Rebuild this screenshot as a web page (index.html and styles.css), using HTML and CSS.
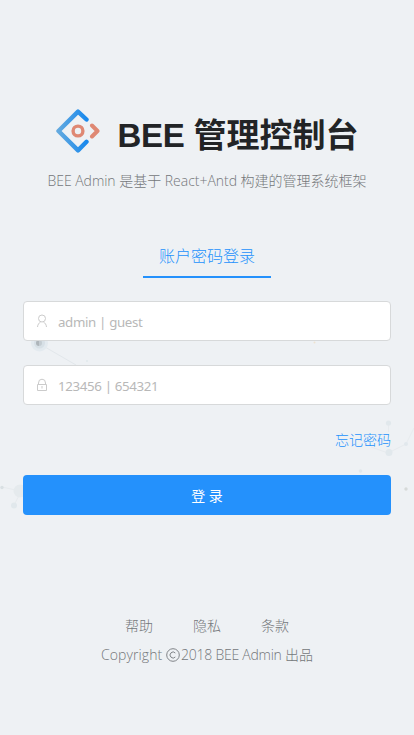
FILE: index.html
```html
<!DOCTYPE html>
<html lang="zh-CN">
<head>
<meta charset="utf-8">
<title>BEE 管理控制台</title>
<link rel="stylesheet" href="styles.css">
</head>
<body>
<svg class="backdrop" width="414" height="735" viewBox="0 0 414 735" aria-hidden="true">
  <g fill="none" stroke="#e7ebee" stroke-width="1">
    <path stroke="#e2e7eb" d="M45 347L76 365"/>
    <path d="M2 487L20 491M14 505L22 490M388.500 423V432M388 453L406 444L414 428M388 453L371 447"/>
  </g>
  <circle cx="39.500" cy="343" r="8.500" fill="#e3eaef"/>
  <circle cx="39.500" cy="343" r="5.500" fill="#d7e0e6"/>
  <path d="M39 340a3 3 0 0 0 0 6z" fill="#aeb5ba"/>
  <path d="M39 340a3 3 0 0 1 0 6z" fill="#c4ccd2"/>
  <g fill="#e1e8ec">
    <circle cx="2" cy="487.500" r="1.700" fill="#d9e0e3"/>
    <circle cx="20" cy="491" r="6.500" fill="#e5eaed"/>
    <circle cx="14" cy="505.500" r="3"/>
    <circle cx="388.500" cy="423" r="2.600"/>
    <circle cx="389" cy="452.500" r="3.500"/>
    <circle cx="406" cy="444" r="2"/>
    <circle cx="360.500" cy="471" r="1.800"/>
    <circle cx="406" cy="489" r="1.700" fill="#d6dad9"/>
    <circle cx="87" cy="361" r="1"/>
    <circle cx="314.500" cy="342.500" r="1" fill="#eee2d0"/>
  </g>
</svg>
<main class="page">
  <header class="brand">
    <svg class="logo" width="44" height="44" viewBox="0 0 44 44" aria-hidden="true">
      <defs><linearGradient id="blue" x1="0" x2="1" y1="0" y2="0"><stop offset="0" stop-color="#62a9df"/><stop offset="1" stop-color="#1989ed"/></linearGradient></defs>
      <path d="M30.500 10.500L22 2.600L2.500 22L22 41.400L30.500 32.800" fill="none" stroke="url(#blue)" stroke-width="4.400" stroke-linecap="round" stroke-linejoin="round"/>
      <circle cx="22" cy="22" r="4.900" fill="none" stroke="#df8873" stroke-width="3.400"/>
      <path d="M36 16.500L41.500 22L36 27.500" fill="none" stroke="#df8873" stroke-width="4" stroke-linecap="round" stroke-linejoin="round"/>
    </svg>
    <h1 class="title"><span class="name">BEE </span>管理控制台</h1>
  </header>
  <p class="subtitle"><span class="latin">BEE Admin </span>是基于<span class="latin"> React+Antd </span>构建的管理系统框架</p>
  <nav class="tabs"><a class="tab">账户密码登录</a></nav>
  <form class="form">
    <label class="field">
      <svg class="field-icon" width="12" height="14" viewBox="0 0 12 14" aria-hidden="true"><circle cx="6" cy="4.500" r="3.500"/><path d="M1.500 13C1.700 10.500 3 8.900 4.600 8M7.400 8C9 8.900 10.300 10.500 10.500 13"/></svg>
      <input class="input" type="text" placeholder="admin | guest">
    </label>
    <label class="field">
      <svg class="field-icon" width="12" height="14" viewBox="0 0 12 14" aria-hidden="true"><path d="M1.500 6.500H10.500V12.500H1.500ZM2.500 6.500V5A3.500 3.800 0 0 1 9.500 5V6.500M6 8V10.500"/></svg>
      <input class="input" type="text" placeholder="123456 | 654321">
    </label>
    <a class="forgot">忘记密码</a>
    <button class="submit" type="button">登 录</button>
  </form>
  <footer class="footer">
    <div class="links"><a>帮助</a><a>隐私</a><a>条款</a></div>
    <p class="copyright"><span class="word">Copyright </span><svg class="copy-mark" width="14" height="14" viewBox="0 0 14 14" aria-label="©"><circle cx="7" cy="7" r="6.300"/><path d="M9.300 5A3 3 0 1 0 9.300 9"/></svg><span class="owner">2018 BEE Admin </span>出品</p>
  </footer>
</main>
</body>
</html>
```
FILE: styles.css
```css
* { box-sizing: border-box; }
body {
  margin: 0;
  min-height: 735px;
  background: #eef1f4;
  color: #74777a;
  font: 14px/21px "Open Sans", "Noto Sans CJK SC", sans-serif;
}
.backdrop { position: absolute; top: 0; left: 0; z-index: -1; }
.page { padding: 109px 23px 0; }
.brand { display: flex; justify-content: center; height: 44px; }
.logo { flex: none; margin-right: 17px; }
.title {
  margin: 5px -1px 0 0;
  color: #222426;
  font: bold 33px/44px "Liberation Sans", "Noto Sans CJK SC", sans-serif;
  white-space: nowrap;
}
.name { letter-spacing: -0.25px; }
.subtitle { margin: 17px 0 0; text-align: center; white-space: pre; font-weight: 300; }
.latin { letter-spacing: -0.03px; }
.tabs { display: flex; justify-content: center; margin-top: 44px; }
.tab {
  height: 43px;
  padding: 9px 16px 0;
  border-bottom: 2px solid #2491fc;
  color: #2491fc;
  font-size: 16px;
  line-height: 24px;
  font-weight: 300;
}
.form { display: flex; flex-direction: column; margin-top: 23px; }
.field {
  display: flex;
  align-items: center;
  height: 40px;
  margin-bottom: 24px;
  padding: 0 12px;
  border: 1px solid #d7d9da;
  border-radius: 4px;
  background: #fff;
}
.field-icon { flex: none; margin-right: 10px; fill: none; stroke: #cbcbcb; stroke-width: 1; }
.input {
  flex: 1;
  min-width: 0;
  height: 26px;
  padding: 1px 0 0;
  border: 0;
  outline: 0;
  background: transparent;
  font: 13.3px/24px "Noto Sans", sans-serif;
  letter-spacing: -0.35px;
}
.input::placeholder { color: #b8b8b8; opacity: 1; }
.forgot { align-self: flex-end; height: 21px; color: #2491fc; font-weight: 300; }
.submit {
  height: 40px;
  margin-top: 25px;
  border: 0;
  border-radius: 4px;
  background: #2491fc;
  color: #fff;
  font: 14px/21px "Open Sans", "Noto Sans CJK SC", sans-serif;
}
.footer { margin-top: 100px; text-align: center; font-weight: 300; }
.links { display: flex; justify-content: center; gap: 40px; }
.copyright { margin: 8px 0 0; white-space: pre; }
.word { letter-spacing: 0.1px; }
.owner { margin-left: 1px; letter-spacing: -0.25px; }
.copy-mark { vertical-align: -2px; fill: none; stroke: #808488; stroke-width: 1; }
```
